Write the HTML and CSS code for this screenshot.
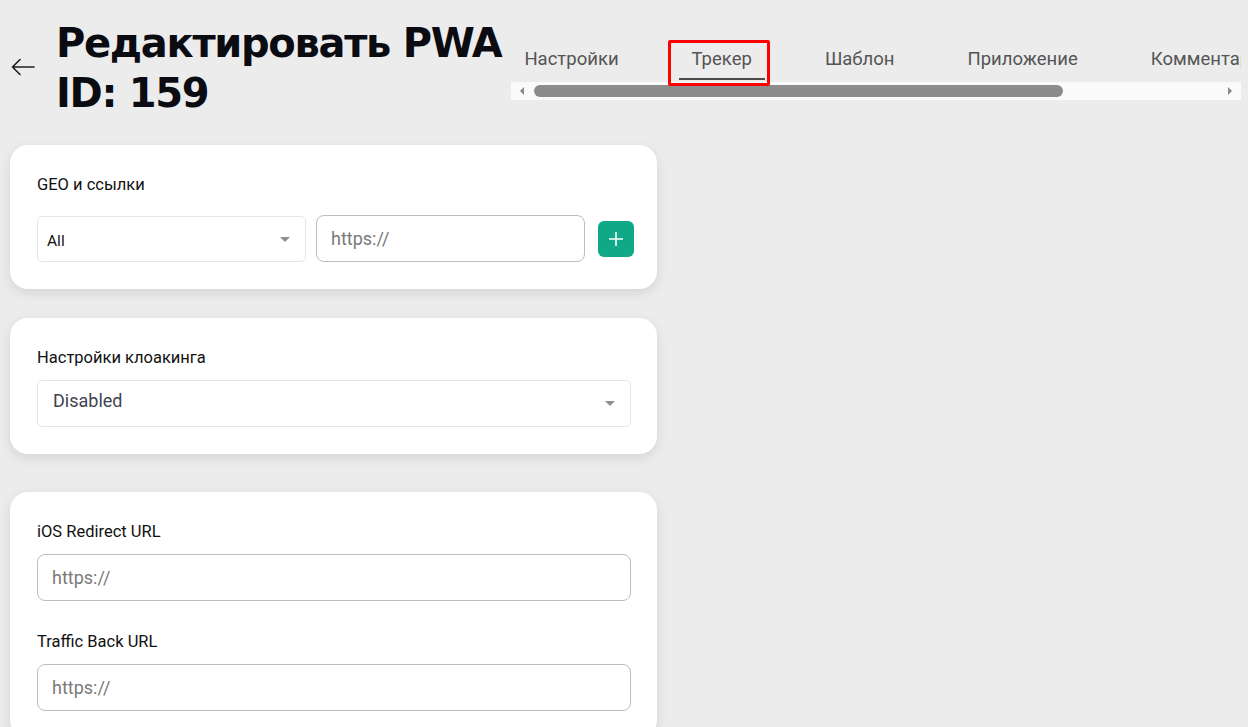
FILE: index.html
```html
<!DOCTYPE html>
<html lang="ru">
<head>
<meta charset="utf-8">
<title>Редактировать PWA</title>
<link rel="stylesheet" href="styles.css">
</head>
<body>
<header class="topbar">
  <button class="back" type="button" aria-label="Назад">
    <svg width="24" height="18" viewBox="0 0 24 18" fill="none" stroke="#1f1f1f" stroke-width="1.6" stroke-linecap="round" stroke-linejoin="round">
      <path d="M23 9H1.5M9 1.5L1.5 9L9 16.5"/>
    </svg>
  </button>
  <h1 class="title"><span>Редактировать PWA</span><span>ID: 159</span></h1>
  <nav class="tabs-wrap">
    <div class="tabs">
      <a class="tab">Настройки</a>
      <a class="tab tab-active">Трекер</a>
      <a class="tab">Шаблон</a>
      <a class="tab">Приложение</a>
      <a class="tab">Комментарии</a>
    </div>
    <div class="scrollbar">
      <span class="sb-arrow sb-left"></span>
      <span class="sb-thumb"></span>
      <span class="sb-arrow sb-right"></span>
    </div>
  </nav>
</header>

<main class="content">
  <section class="card">
    <div class="label">GEO и ссылки</div>
    <div class="geo-row">
      <div class="select select-geo"><span class="select-value">All</span><span class="caret"></span></div>
      <div class="input input-geo"><span class="placeholder">https://</span></div>
      <button class="add" type="button" aria-label="Добавить">
        <svg width="16" height="16" viewBox="0 0 16 16" stroke="#fff" stroke-width="1.6"><path d="M8 1v14M1 8h14"/></svg>
      </button>
    </div>
  </section>

  <section class="card">
    <div class="label">Настройки клоакинга</div>
    <div class="select select-wide"><span class="select-value select-muted">Disabled</span><span class="caret"></span></div>
  </section>

  <section class="card card-spaced">
    <div class="label">iOS Redirect URL</div>
    <div class="input input-wide"><span class="placeholder">https://</span></div>
    <div class="label label-next">Traffic Back URL</div>
    <div class="input input-wide"><span class="placeholder">https://</span></div>
  </section>
</main>
</body>
</html>
```

FILE: styles.css
```css
* {
  box-sizing: border-box;
}

html, body {
  margin: 0;
  height: 100%;
  overflow: hidden;
}

body {
  background: #ececec;
  font-family: Roboto, "Noto Sans", Arial, sans-serif;
  color: #1b1b1b;
}

/* ---------- header ---------- */
.topbar {
  display: flex;
  align-items: flex-start;
}

.back {
  flex: none;
  width: 56px;
  height: 40px;
  margin-top: 47px;
  padding: 0 0 0 11px;
  border: 0;
  background: none;
  display: flex;
  align-items: center;
}

.title {
  flex: none;
  margin: 18px 10px 0 0;
  font-family: "DejaVu Sans", sans-serif;
  font-weight: 700;
  font-size: 40px;
  line-height: 50px;
  letter-spacing: -1.3px;
  color: #0b0b12;
}

.title span {
  display: block;
  white-space: nowrap;
}

.tabs-wrap {
  flex: 1;
  min-width: 0;
  margin: 40px 7px 0 0;
}

.tabs {
  display: flex;
  gap: 47px;
  overflow-x: clip;
  overflow-y: visible;
  white-space: nowrap;
}

.tab {
  position: relative;
  flex: none;
  padding: 7px 13px 7px;
  font-size: 18.5px;
  line-height: 24px;
  color: #555;
  border-bottom: 2px solid transparent;
}

.tab-active {
  border-bottom-color: #4a4a4a;
}

/* highlight frame around the active tab */
.tab-active::after {
  content: "";
  position: absolute;
  left: -11px;
  right: -5px;
  top: 0;
  bottom: -8px;
  border: 3px solid #f00;
  border-radius: 2px;
  z-index: 2;
}

.scrollbar {
  margin-top: 2px;
  height: 18px;
  background: #fafafa;
  display: flex;
  align-items: center;
  padding: 0 9px 0 9px;
}

.sb-arrow {
  flex: none;
  width: 0;
  height: 0;
  border-top: 4px solid transparent;
  border-bottom: 4px solid transparent;
}

.sb-left {
  border-right: 4px solid #8a8a8a;
}

.sb-right {
  margin-left: auto;
  border-left: 4px solid #8a8a8a;
}

.sb-thumb {
  flex: none;
  width: 529px;
  height: 12px;
  margin-left: 10px;
  border-radius: 6px;
  background: #8c8c8c;
}

/* ---------- cards ---------- */
.content {
  width: 657px;
  padding: 27px 0 0 10px;
}

.card {
  background: #fff;
  border-radius: 18px;
  padding: 30px 27px 27px;
  box-shadow: 0 4px 12px rgba(0, 0, 0, 0.1);
  margin-bottom: 29px;
}

.card-spaced {
  margin-top: 38px;
}

.card:nth-child(2) {
  margin-bottom: 0;
}

.label {
  font-size: 16.5px;
  line-height: 20px;
  color: #111;
  margin-bottom: 12px;
}

.label-next {
  margin-top: 31px;
}

.geo-row {
  display: flex;
  align-items: center;
  margin-top: 20px;
}

.select,
.input {
  display: flex;
  align-items: center;
  height: 47px;
  background: #fff;
}

.select {
  border: 1px solid #e6e6e6;
  border-radius: 5px;
  padding: 0 15px 0 15px;
}

.select-geo {
  flex: none;
  width: 269px;
  height: 46px;
  padding-left: 9px;
  margin-top: 1px;
}

.select-wide {
  width: 594px;
}

.select-value {
  font-size: 15.5px;
  color: #111;
  padding-top: 3px;
}

.select-muted {
  font-size: 18px;
  color: #3d4451;
  padding-top: 0;
  margin-top: -6px;
}

.caret {
  margin-left: auto;
  width: 0;
  height: 0;
  border-left: 5px solid transparent;
  border-right: 5px solid transparent;
  border-top: 5px solid #8f8f8f;
}

.input {
  border: 1px solid #bdbdbd;
  border-radius: 8px;
  padding: 0 14px;
}

.input-geo {
  flex: none;
  width: 269px;
  margin-left: 10px;
}

.input-wide {
  width: 594px;
}

.placeholder {
  font-size: 18px;
  color: #7a7a7a;
}

.add {
  flex: none;
  width: 36px;
  height: 36px;
  margin-left: 13px;
  border: 0;
  border-radius: 6px;
  background: #0fa987;
  display: flex;
  align-items: center;
  justify-content: center;
  padding: 0;
}
```
